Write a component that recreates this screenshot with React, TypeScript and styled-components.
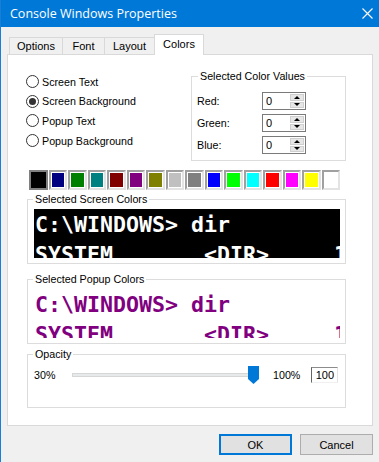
import React from "react";
import styled, { createGlobalStyle } from "styled-components";

const Global = createGlobalStyle`
  html, body { margin: 0; padding: 0; background: #f0f0f0; }
  body { font-family: "Liberation Sans", Arial, sans-serif; font-size: 10.7px; color: #000; }
  * { box-sizing: border-box; }
`;

const Window = styled.div`
  width: 379px;
  height: 462px;
  background: #f0f0f0;
  border-left: 1px solid #1a7fd4;
  display: flex;
  flex-direction: column;
  overflow: hidden;
`;

const TitleBar = styled.div`
  height: 27px;
  flex: none;
  background: #0078d7;
  color: #fff;
  display: flex;
  align-items: center;
  padding: 0 6px 0 9px;
  font-family: "Open Sans", "Noto Sans", sans-serif;
  font-size: 12.5px;
`;

const Title = styled.div`
  flex: 1;
`;

const Body = styled.div`
  padding: 0 6px;
  display: flex;
  flex-direction: column;
`;

const TabRow = styled.div`
  margin-top: 7px;
  height: 21px;
  padding-left: 2px;
  display: flex;
  align-items: flex-end;
  position: relative;
  z-index: 1;
`;

const Tab = styled.div<{ $w: number; $active?: boolean }>`
  width: ${(p) => p.$w}px;
  height: ${(p) => (p.$active ? 21 : 18)}px;
  margin-left: -1px;
  &:first-child { margin-left: 0; }
  border: 1px solid #d9d9d9;
  border-bottom: ${(p) => (p.$active ? "none" : "1px solid #d9d9d9")};
  background: ${(p) => (p.$active ? "#fff" : "#f0f0f0")};
  display: flex;
  align-items: center;
  justify-content: center;
  padding-bottom: ${(p) => (p.$active ? 3 : 0)}px;
  font-size: 11px;
`;

const Panel = styled.div`
  margin-top: -1px;
  height: 372px;
  background: #fff;
  border: 1px solid #d9d9d9;
  padding: 15px 26px 0 19px;
  display: flex;
  flex-direction: column;
`;

const TopSection = styled.div`
  display: flex;
  align-items: flex-start;
`;

const RadioColumn = styled.div`
  margin-top: 2px;
  margin-left: -1px;
  display: flex;
  flex-direction: column;
`;

const RadioRow = styled.div`
  height: 19.6px;
  display: flex;
  align-items: center;
  gap: 3px;
`;

const RadioCircle = styled.span<{ $checked?: boolean }>`
  width: 13px;
  height: 13px;
  border-radius: 50%;
  border: 1px solid #333;
  background: #fff;
  display: flex;
  align-items: center;
  justify-content: center;
  &::after {
    content: "";
    width: 7px;
    height: 7px;
    border-radius: 50%;
    background: ${(p) => (p.$checked ? "#333" : "transparent")};
  }
`;

const Group = styled.fieldset<{ $w: number }>`
  width: ${(p) => p.$w}px;
  margin: 0;
  padding: 0;
  border: 1px solid #dcdcdc;
  min-width: 0;
`;

const Legend = styled.legend<{ $ml?: number }>`
  margin-left: ${(p) => p.$ml ?? 5}px;
  padding: 0 2px;
  line-height: 13px;
  font-size: 10.7px;
`;

const ValuesGroup = styled(Group)`
  margin-left: auto;
  height: 91px;
`;

const ValuesInner = styled.div`
  padding: 9px 0 0 5px;
  display: flex;
  flex-direction: column;
  gap: 4px;
`;

const ValueRow = styled.div`
  display: flex;
  align-items: center;
  height: 18px;
`;

const ValueLabel = styled.span`
  width: 65px;
`;

const Spin = styled.div`
  width: 44px;
  height: 18px;
  border: 1px solid #7a7a7a;
  background: #fff;
  display: flex;
`;

const SpinValue = styled.span`
  flex: 1;
  padding-left: 3px;
  line-height: 16px;
  font-size: 11px;
`;

const SpinButtons = styled.div`
  width: 16px;
  padding: 1px;
  display: flex;
  flex-direction: column;
  gap: 1px;
`;

const SpinBtn = styled.div<{ $down?: boolean }>`
  flex: 1;
  background: #e6e6e6;
  border: 1px solid #cfcfcf;
  display: flex;
  align-items: center;
  justify-content: center;
  &::after {
    content: "";
    border-left: 3px solid transparent;
    border-right: 3px solid transparent;
    ${(p) => (p.$down ? "border-top: 3px solid #000;" : "border-bottom: 3px solid #000;")}
  }
`;

const Palette = styled.div`
  margin: 9px 0 0 2px;
  width: 312px;
  height: 20px;
  display: grid;
  grid-template-columns: repeat(16, 1fr);
`;

const Swatch = styled.div<{ $c: string; $selected?: boolean }>`
  margin-right: 1px;
  border-top: 2px solid #a0a0a0;
  border-left: 2px solid #a0a0a0;
  border-right: 2px solid #e3e3e3;
  border-bottom: 2px solid #e3e3e3;
  padding: ${(p) => (p.$selected ? 0 : 1)}px;
  background: #fff;
  ${(p) => (p.$selected ? "border-color: #808080;" : "")}
  &::after {
    content: "";
    display: block;
    width: 100%;
    height: 100%;
    background: ${(p) => p.$c};
  }
`;

const PreviewGroup = styled(Group)<{ $mt: number }>`
  margin-top: ${(p) => p.$mt}px;
`;

const PreviewInner = styled.div`
  padding: 3px 5px 5px 6px;
`;

const Preview = styled.div<{ $bg: string; $fg: string }>`
  height: 49px;
  background: ${(p) => p.$bg};
  color: ${(p) => p.$fg};
  font-family: "DejaVu Sans Mono", "Liberation Mono", monospace;
  font-weight: bold;
  font-size: 21.6px;
  line-height: 30px;
  white-space: pre;
  overflow: hidden;
  padding: 1px 0 0 1px;
`;

const OpacityInner = styled.div`
  padding: 5px 0 23px 6px;
  display: flex;
  align-items: center;
  height: 46px;
`;

const OpLabel = styled.span<{ $w: number }>`
  width: ${(p) => p.$w}px;
`;

const Slider = styled.div`
  position: relative;
  width: 187px;
  height: 18px;
  margin-right: 14px;
  display: flex;
  align-items: center;
`;

const Track = styled.div`
  width: 184px;
  height: 4px;
  background: #e7eaea;
  border: 1px solid #d6d6d6;
`;

const Thumb = styled.svg`
  position: absolute;
  left: 176px;
  top: 0;
`;

const NumBox = styled.div`
  width: 27px;
  height: 16px;
  border-top: 1px solid #8c8c8c;
  border-left: 1px solid #646464;
  border-right: 1px solid #e3e3e3;
  border-bottom: 1px solid #f0f0f0;
  text-align: right;
  padding-right: 3px;
  line-height: 14px;
  font-size: 11px;
`;

const ButtonRow = styled.div`
  margin-top: 8px;
  display: flex;
  justify-content: flex-end;
  gap: 8px;
  padding-right: 0px;
`;

const Button = styled.div<{ $default?: boolean }>`
  width: 73px;
  height: 21px;
  background: #e1e1e1;
  border: ${(p) => (p.$default ? "2px solid #0078d7" : "1px solid #adadad")};
  display: flex;
  align-items: center;
  justify-content: center;
  font-size: 11px;
`;

const colors = [
  "#000000", "#000080", "#008000", "#008080", "#800000", "#800080", "#808000", "#c0c0c0",
  "#808080", "#0000ff", "#00ff00", "#00ffff", "#ff0000", "#ff00ff", "#ffff00", "#ffffff",
];

const previewText = "C:\\WINDOWS> dir\nSYSTEM       <DIR>     10-01-99";

const Radio = ({ label, checked }: { label: string; checked?: boolean }) => (
  <RadioRow>
    <RadioCircle $checked={checked} />
    <span>{label}</span>
  </RadioRow>
);

const SpinBox = () => (
  <Spin>
    <SpinValue>0</SpinValue>
    <SpinButtons>
      <SpinBtn />
      <SpinBtn $down />
    </SpinButtons>
  </Spin>
);

export default function App() {
  return (
    <>
      <Global />
      <Window>
        <TitleBar>
          <Title>Console Windows Properties</Title>
          <svg width="11" height="11" viewBox="0 0 11 11">
            <path d="M0.5 0.5 L10.5 10.5 M10.5 0.5 L0.5 10.5" stroke="#fff" strokeWidth="1.1" />
          </svg>
        </TitleBar>
        <Body>
          <TabRow>
            <Tab $w={54}>Options</Tab>
            <Tab $w={43}>Font</Tab>
            <Tab $w={51}>Layout</Tab>
            <Tab $w={50} $active>Colors</Tab>
          </TabRow>
          <Panel>
            <TopSection>
              <RadioColumn>
                <Radio label="Screen Text" />
                <Radio label="Screen Background" checked />
                <Radio label="Popup Text" />
                <Radio label="Popup Background" />
              </RadioColumn>
              <ValuesGroup $w={155}>
                <Legend $ml={6}>Selected Color Values</Legend>
                <ValuesInner>
                  <ValueRow><ValueLabel>Red:</ValueLabel><SpinBox /></ValueRow>
                  <ValueRow><ValueLabel>Green:</ValueLabel><SpinBox /></ValueRow>
                  <ValueRow><ValueLabel>Blue:</ValueLabel><SpinBox /></ValueRow>
                </ValuesInner>
              </ValuesGroup>
            </TopSection>
            <Palette>
              {colors.map((c, i) => (
                <Swatch key={c} $c={c} $selected={i === 0} />
              ))}
            </Palette>
            <PreviewGroup $w={319} $mt={3}>
              <Legend>Selected Screen Colors</Legend>
              <PreviewInner>
                <Preview $bg="#000" $fg="#fff">{previewText}</Preview>
              </PreviewInner>
            </PreviewGroup>
            <PreviewGroup $w={319} $mt={9}>
              <Legend>Selected Popup Colors</Legend>
              <PreviewInner>
                <Preview $bg="#fff" $fg="#800080">{previewText}</Preview>
              </PreviewInner>
            </PreviewGroup>
            <PreviewGroup $w={319} $mt={4}>
              <Legend>Opacity</Legend>
              <OpacityInner>
                <OpLabel $w={38}>30%</OpLabel>
                <Slider>
                  <Track />
                  <Thumb width="11" height="18" viewBox="0 0 11 18">
                    <polygon points="0,0 11,0 11,13 5.5,18 0,13" fill="#0078d7" />
                  </Thumb>
                </Slider>
                <OpLabel $w={38}>100%</OpLabel>
                <NumBox>100</NumBox>
              </OpacityInner>
            </PreviewGroup>
          </Panel>
          <ButtonRow>
            <Button $default>OK</Button>
            <Button>Cancel</Button>
          </ButtonRow>
        </Body>
      </Window>
    </>
  );
}
